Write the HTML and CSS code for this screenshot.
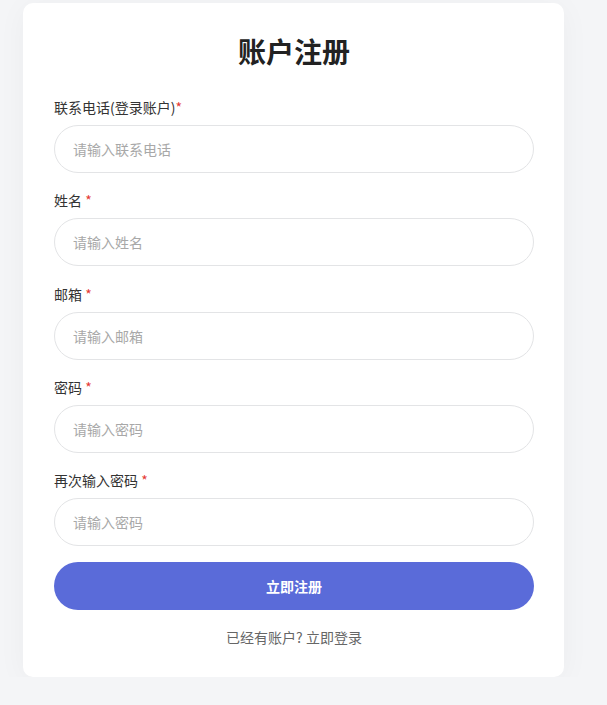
FILE: index.html
```html
<!DOCTYPE html>
<html lang="zh-CN">
<head>
    <meta charset="UTF-8">
    <meta name="viewport" content="width=device-width, initial-scale=1.0">
    <title>账户注册</title>
    <link rel="stylesheet" href="styles.css">
</head>
<body>
    <div class="card">
        <h2 class="title">账户注册</h2>
        <div class="field">
            <label>联系电话(登录账户)<span class="req">*</span></label>
            <input type="text" placeholder="请输入联系电话">
        </div>
        <div class="field">
            <label>姓名 <span class="req">*</span></label>
            <input type="text" placeholder="请输入姓名">
        </div>
        <div class="field">
            <label>邮箱 <span class="req">*</span></label>
            <input type="text" placeholder="请输入邮箱">
        </div>
        <div class="field">
            <label>密码 <span class="req">*</span></label>
            <input type="password" placeholder="请输入密码">
        </div>
        <div class="field last">
            <label>再次输入密码 <span class="req">*</span></label>
            <input type="password" placeholder="请输入密码">
        </div>
        <button class="submit">立即注册</button>
        <p class="login">已经有账户? 立即登录</p>
    </div>
</body>
</html>
```

FILE: styles.css
```css
body {
    margin: 0;
    background: #f4f5f7;
    font-family: "Noto Sans CJK SC", "Noto Sans", sans-serif;
    color: #333;
}
.card {
    box-sizing: border-box;
    width: 541px;
    margin: 3px 0 0 23px;
    padding: 30px 30px 30px 31px;
    background: #fff;
    border-radius: 10px;
    box-shadow: 0 4px 30px rgba(0, 0, 0, 0.04);
}
.title {
    margin: 0 0 28px;
    font-size: 28px;
    line-height: 36px;
    font-weight: bold;
    text-align: center;
    color: #222;
}
.field {
    margin-bottom: 17.25px;
}
.field.last {
    margin-bottom: 16px;
}
.field label {
    display: block;
    font-size: 14px;
    line-height: 20px;
    margin-bottom: 8px;
    color: #333;
}
.req {
    color: #e53935;
}
.field input {
    display: block;
    box-sizing: border-box;
    width: 480px;
    height: 48px;
    padding: 0 18px;
    border: 1px solid #e3e4e6;
    border-radius: 24px;
    font-family: inherit;
    font-size: 14px;
    color: #333;
    outline: none;
}
.field input::placeholder {
    color: #a8a8a8;
}
.submit {
    display: block;
    width: 480px;
    height: 48px;
    border: none;
    border-radius: 24px;
    background: #5a6bd9;
    color: #fff;
    font-family: inherit;
    font-size: 14px;
    font-weight: bold;
    cursor: pointer;
}
.login {
    margin: 17px 0 0;
    font-size: 14px;
    line-height: 20px;
    text-align: center;
    color: #666;
}
```
